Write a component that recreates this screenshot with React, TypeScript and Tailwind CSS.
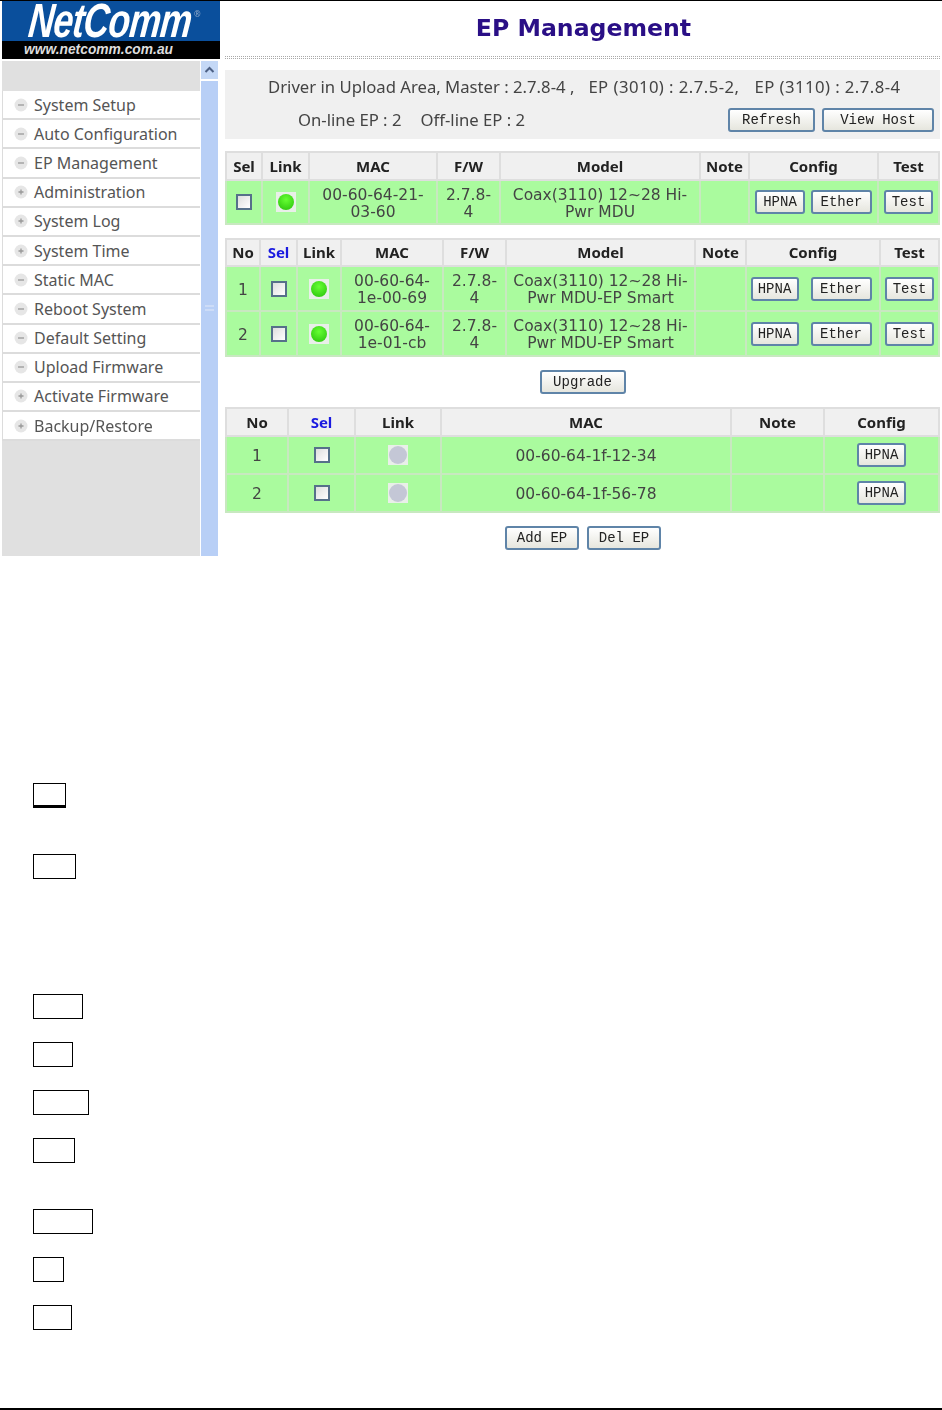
import { Fragment } from 'react'

const BODY_FONT = 'font-["Noto_Sans","DejaVu_Sans",sans-serif]'

const menu = [
  { label: 'System Setup', open: false },
  { label: 'Auto Configuration', open: false },
  { label: 'EP Management', open: false },
  { label: 'Administration', open: true },
  { label: 'System Log', open: true },
  { label: 'System Time', open: true },
  { label: 'Static MAC', open: false },
  { label: 'Reboot System', open: false },
  { label: 'Default Setting', open: false },
  { label: 'Upload Firmware', open: false },
  { label: 'Activate Firmware', open: true },
  { label: 'Backup/Restore', open: true },
]

const boxes = [
  'mt-[227px] w-[33px] border-b-[3px]',
  'mt-[46px] w-[43px]',
  'mt-[115px] w-[50px]',
  'mt-[23px] w-[40px]',
  'mt-[23px] w-[56px]',
  'mt-[23px] w-[42px]',
  'mt-[46px] w-[60px]',
  'mt-[23px] w-[31px]',
  'mt-[23px] w-[39px]',
]

function MenuIcon({ open }: { open: boolean }) {
  return (
    <svg width="14" height="14" viewBox="0 0 14 14" className="shrink-0">
      <circle cx="7" cy="7" r="6.5" fill="#e6e6e6" />
      <path d={open ? 'M4.5 7h5M7 4.5v5' : 'M4 7h6'} stroke="#999" strokeWidth="1.3" />
    </svg>
  )
}

function Btn({ children, className = '' }: { children: string; className?: string }) {
  return (
    <button className={`h-[24px] rounded-[3px] border-2 border-[#5f84a8] bg-gradient-to-b from-white to-[#e6e6de] font-['Liberation_Mono',monospace] text-[14px] leading-none text-[#222] ${className}`}>
      {children}
    </button>
  )
}

function Check() {
  return <span className="mx-auto block h-[16px] w-[16px] border-2 border-[#56708a] bg-gradient-to-br from-[#dedede] to-white" />
}

function Led({ on = true }: { on?: boolean }) {
  return (
    <span className="mx-auto flex h-[20px] w-[20px] items-center justify-center bg-[#e9efe9]">
      {on ? (
        <span className="block h-[16px] w-[16px] rounded-full bg-[radial-gradient(circle_at_50%_35%,#66ff33,#33cc11_80%)]" />
      ) : (
        <span className="block h-[18px] w-[18px] rounded-full bg-[#c4c7d6]" />
      )}
    </span>
  )
}

const th = 'border-2 border-[#dedede] bg-[#f0f0f0] text-center text-[15px] font-bold text-[#222]'
const td = "border-2 border-[#c8e8c0] bg-[#aafb9e] text-center font-['DejaVu_Sans',sans-serif] text-[15.5px] leading-[17px] text-[#444]"
const tdText = `${td} pt-[3px]`
const tdModel = `${td} whitespace-nowrap pt-[3px] text-[15.3px]`

function ConfigCell({ wide }: { wide?: boolean }) {
  return (
    <div className={`flex items-center justify-center ${wide ? 'gap-[12px] pr-[4px]' : 'gap-[6px]'}`}>
      <Btn className={wide ? 'w-[48px]' : 'w-[50px]'}>HPNA</Btn>
      <Btn className="w-[61px]">Ether</Btn>
    </div>
  )
}

const epRows = [
  { no: '1', mac: ['00-60-64-', '1e-00-69'] },
  { no: '2', mac: ['00-60-64-', '1e-01-cb'] },
]

const offRows = [
  { no: '1', mac: '00-60-64-1f-12-34' },
  { no: '2', mac: '00-60-64-1f-56-78' },
]

export default function App() {
  return (
    <div className={`flex h-[1410px] w-[942px] flex-col overflow-hidden bg-white ${BODY_FONT}`}>
      <div className="h-px bg-black" />

      {/* router page screenshot */}
      <div className="flex h-[555px] blur-[0.45px]">
        <aside className="ml-[2px] flex w-[218px] flex-col">
          <div className="flex h-[58px] flex-col bg-black">
            <div className="relative flex h-[40px] items-center bg-[#0a4f9c] pl-[27px]">
              <span className="block w-[165px] origin-left -skew-x-[8deg] scale-x-[0.74] whitespace-nowrap font-['Liberation_Sans',sans-serif] text-[48px] font-bold italic leading-[40px] tracking-[-1px] text-white">
                NetComm
              </span>
              <span className="absolute left-[192px] top-[9px] text-[8px] leading-none text-[#8fa8c8]">®</span>
            </div>
            <div className="pl-[22px] font-['Liberation_Sans',sans-serif] text-[13.8px] font-bold italic leading-[18px] text-[#ddd]">
              www.netcomm.com.au
            </div>
          </div>
          <div className="mt-[2px] flex flex-1">
            <nav className="flex w-[198px] flex-col bg-[#e0e0e0] pt-[30px]">
              {menu.map((item) => (
                <div
                  key={item.label}
                  className="flex h-[29.2px] items-center gap-[6px] border-b-2 border-l border-[#dcdcdc] bg-white pl-[11px] text-[16px] text-[#555]"
                >
                  <MenuIcon open={item.open} />
                  <span>{item.label}</span>
                </div>
              ))}
            </nav>
            <div className="ml-[1px] flex w-[17px] flex-col items-center gap-[2px]">
              <div className="flex h-[18px] w-full items-center justify-center bg-[#c4d8f6]">
                <svg width="11" height="8" viewBox="0 0 11 8">
                  <path d="M1.5 6 5.5 2l4 4" fill="none" stroke="#4d6185" strokeWidth="2" />
                </svg>
              </div>
              <div className="flex w-full flex-1 items-center justify-center bg-[#b8cff6] pb-[22px]">
                <div className="h-[6px] w-[9px] border-y-2 border-[#cddcf7]" />
              </div>
            </div>
          </div>
        </aside>

        <main className="ml-[5px] w-[715px]">
          <h1 className="flex h-[55px] items-center justify-center pl-[2px] font-['DejaVu_Sans',sans-serif] text-[23.6px] font-bold leading-none text-[#2a0f86]">
            EP Management
          </h1>
          <div className="h-[3px] border-y border-dotted border-[#aaa]" />

          <div className="mt-[11px] h-[69px] bg-[#f0f0f0] text-[16.7px] text-[#444]">
            <div className="flex h-[33px] items-center whitespace-pre pl-[43px]">
              <span>Driver in Upload Area, Master : 2.7.8-4 ,</span>
              <span className="ml-[14px] tracking-[0.45px]">EP (3010) : 2.7.5-2,</span>
              <span className="ml-[15px] tracking-[0.45px]">EP (3110) : 2.7.8-4</span>
            </div>
            <div className="flex h-[34px] items-center justify-between pl-[73px] pr-[6px]">
              <div className="flex gap-[19px] whitespace-pre">
                <span>On-line EP : 2</span>
                <span>Off-line EP : 2</span>
              </div>
              <div className="flex gap-[7px]">
                <Btn className="w-[87px]">Refresh</Btn>
                <Btn className="w-[112px]">View Host</Btn>
              </div>
            </div>
          </div>

          <table className="mt-[12px] w-[715px] table-fixed border-collapse">
            <colgroup>
              <col className="w-[36px]" />
              <col className="w-[47px]" />
              <col className="w-[128px]" />
              <col className="w-[63px]" />
              <col className="w-[200px]" />
              <col className="w-[49px]" />
              <col className="w-[129px]" />
              <col />
            </colgroup>
            <thead>
              <tr className="h-[28px]">
                {['Sel', 'Link', 'MAC', 'F/W', 'Model', 'Note', 'Config', 'Test'].map((h) => (
                  <th key={h} className={th}>{h}</th>
                ))}
              </tr>
            </thead>
            <tbody>
              <tr className="h-[44px]">
                <td className={td}><Check /></td>
                <td className={td}><Led /></td>
                <td className={tdText}>00-60-64-21-<br />03-60</td>
                <td className={tdText}>2.7.8-<br />4</td>
                <td className={tdModel}>Coax(3110) 12~28 Hi-<br />Pwr MDU</td>
                <td className={td} />
                <td className={td}><ConfigCell /></td>
                <td className={td}><Btn className="w-[49px]">Test</Btn></td>
              </tr>
            </tbody>
          </table>

          <table className="mt-[13px] w-[715px] table-fixed border-collapse">
            <colgroup>
              <col className="w-[34px]" />
              <col className="w-[37px]" />
              <col className="w-[44px]" />
              <col className="w-[102px]" />
              <col className="w-[63px]" />
              <col className="w-[189px]" />
              <col className="w-[51px]" />
              <col className="w-[134px]" />
              <col />
            </colgroup>
            <thead>
              <tr className="h-[27px]">
                {['No', 'Sel', 'Link', 'MAC', 'F/W', 'Model', 'Note', 'Config', 'Test'].map((h) => (
                  <th key={h} className={`${th} ${h === 'Sel' ? '!text-[#1a1ae0]' : ''}`}>{h}</th>
                ))}
              </tr>
            </thead>
            <tbody>
              {epRows.map((r) => (
                <tr key={r.no} className="h-[45px]">
                  <td className={tdText}>{r.no}</td>
                  <td className={td}><Check /></td>
                  <td className={td}><Led /></td>
                  <td className={tdText}>
                    {r.mac.map((m, i) => (
                      <Fragment key={m}>{i > 0 && <br />}{m}</Fragment>
                    ))}
                  </td>
                  <td className={tdText}>2.7.8-<br />4</td>
                  <td className={tdModel}>Coax(3110) 12~28 Hi-<br />Pwr MDU-EP Smart</td>
                  <td className={td} />
                  <td className={td}><ConfigCell wide /></td>
                  <td className={td}><Btn className="w-[49px]">Test</Btn></td>
                </tr>
              ))}
            </tbody>
          </table>

          <div className="mt-[13px] flex justify-center">
            <Btn className="w-[86px]">Upgrade</Btn>
          </div>

          <table className="mt-[13px] w-[715px] table-fixed border-collapse">
            <colgroup>
              <col className="w-[62px]" />
              <col className="w-[67px]" />
              <col className="w-[86px]" />
              <col className="w-[290px]" />
              <col className="w-[93px]" />
              <col />
            </colgroup>
            <thead>
              <tr className="h-[28px]">
                {['No', 'Sel', 'Link', 'MAC', 'Note', 'Config'].map((h) => (
                  <th key={h} className={`${th} ${h === 'Sel' ? '!text-[#1a1ae0]' : ''}`}>{h}</th>
                ))}
              </tr>
            </thead>
            <tbody>
              {offRows.map((r) => (
                <tr key={r.no} className="h-[38px]">
                  <td className={tdText}>{r.no}</td>
                  <td className={td}><Check /></td>
                  <td className={td}><Led on={false} /></td>
                  <td className={tdText}>{r.mac}</td>
                  <td className={td} />
                  <td className={td}><Btn className="w-[49px]">HPNA</Btn></td>
                </tr>
              ))}
            </tbody>
          </table>

          <div className="mt-[13px] flex justify-center gap-[8px] pl-[1px]">
            <Btn className="w-[74px]">Add EP</Btn>
            <Btn className="w-[74px]">Del EP</Btn>
          </div>
        </main>
      </div>

      {/* empty label boxes below the screenshot */}
      <div className="flex flex-1 flex-col items-start pl-[33px]">
        {boxes.map((b) => (
          <div key={b} className={`h-[25px] border border-black bg-white ${b}`} />
        ))}
      </div>
      <div className="h-[2px] bg-black" />
    </div>
  )
}
